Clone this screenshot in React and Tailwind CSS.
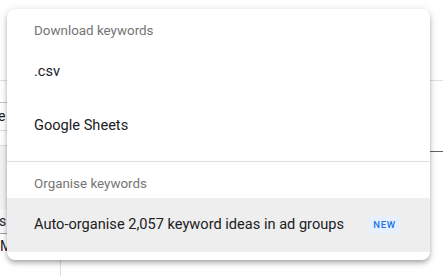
import React from "react";

const font = { fontFamily: "Roboto, 'Noto Sans', sans-serif" };

function Background() {
  return (
    <div className="absolute inset-0 bg-white">
      {/* top rule */}
      <div className="h-[81px] border-b border-[#e0e0e0]" />
      <div className="flex">
        {/* left table column, mostly hidden under the menu */}
        <div className="w-[61px] text-[14px] text-[#202124]">
          <div className="h-[21px]" />
          <div className="h-[28px] border-t border-[#c4c7c5] flex items-center">
            <span className="-ml-[2px]">e</span>
          </div>
          <div className="h-[15px] border-t border-[#dadce0]" />
          <div className="h-[64px] border-t border-[#dadce0] bg-[#f1f3f4]" />
          <div className="h-[24px] bg-[#f8f9fa] flex items-center">
            <span className="-ml-[1px]">s</span>
          </div>
          <div className="h-[26px] border-t border-[#9aa0a6] flex items-center">
            <span>Mo</span>
          </div>
          <div className="h-[20px] border-r border-[#dadce0]" />
        </div>
        <div className="flex-1" />
        <div className="w-[13px]">
          <div className="h-[71px] border-b border-[#5f6368]" />
        </div>
      </div>
    </div>
  );
}

export default function App() {
  return (
    <div className="relative w-[443px] h-[276px] overflow-hidden bg-white" style={font}>
      <Background />

      {/* menu overlay */}
      <div className="absolute left-[7px] top-[9px] w-[423px] rounded-lg bg-white shadow-[0_2px_4px_-1px_rgba(0,0,0,0.2),0_4px_5px_0_rgba(0,0,0,0.14),0_1px_10px_0_rgba(0,0,0,0.12)] overflow-hidden">
        <div className="py-2">
          <div className="h-[28px] flex items-center pl-[27px] text-[13.4px] text-[#757575]">
            Download keywords
          </div>
          <div className="h-[54px] flex items-center pl-[27px] text-[14.6px] text-[#202124]">
            .csv
          </div>
          <div className="h-[54px] flex items-center pl-[27px] text-[14.6px] text-[#202124]">
            Google Sheets
          </div>
        </div>
        <div className="border-t border-[#e0e0e0] py-2">
          <div className="h-[28px] flex items-center pl-[27px] text-[13.4px] text-[#757575]">
            Organise keywords
          </div>
          <div className="h-[54px] flex items-center justify-between pl-[27px] pr-[30px] bg-[#eeeeee] text-[14.6px] text-[#202124]">
            <span>Auto-organise 2,057 keyword ideas in ad groups</span>
            <span className="px-[4px] py-[4px] rounded bg-[#e8f0fe] text-[9.5px] font-medium tracking-[0.08em] text-[#1a73e8] leading-none">
              NEW
            </span>
          </div>
        </div>
      </div>
    </div>
  );
}
